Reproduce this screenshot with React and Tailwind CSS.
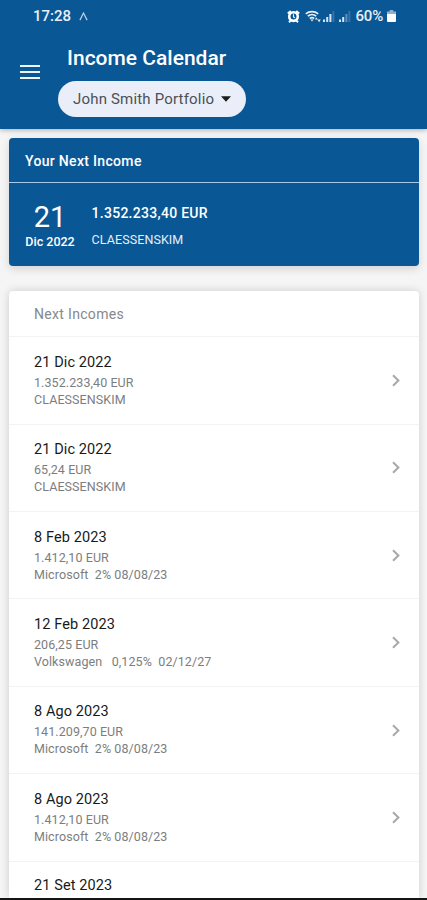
const incomes = [
  { date: '21 Dic 2022', amount: '1.352.233,40 EUR', name: 'CLAESSENSKIM' },
  { date: '21 Dic 2022', amount: '65,24 EUR', name: 'CLAESSENSKIM' },
  { date: '8 Feb 2023', amount: '1.412,10 EUR', name: 'Microsoft  2% 08/08/23' },
  { date: '12 Feb 2023', amount: '206,25 EUR', name: 'Volkswagen   0,125%  02/12/27' },
  { date: '8 Ago 2023', amount: '141.209,70 EUR', name: 'Microsoft  2% 08/08/23' },
  { date: '8 Ago 2023', amount: '1.412,10 EUR', name: 'Microsoft  2% 08/08/23' },
]

function AlarmIcon() {
  return (
    <svg className="w-[13px] h-[13px]" viewBox="0 0 13 13" fill="none">
      <circle cx="6.5" cy="6.6" r="4.3" stroke="#fff" strokeWidth="2.6" />
      <path d="M.8 3.4 3.8.9M12.2 3.4 9.2.9M2 12.2l1.8-1.8M11 12.2 9.2 10.4" stroke="#fff" strokeWidth="2" />
      <path d="M6.5 4.2v2.7l1.4.8" stroke="#fff" strokeWidth="1.1" />
    </svg>
  )
}

function WifiIcon() {
  return (
    <svg className="w-[17px] h-[13px]" viewBox="0 0 17 13" fill="none">
      <path d="M.8 3.8C4.2.8 9.8.8 13.2 3.8M2.8 6.2c2.4-2 6-2 8.4 0M4.8 8.5c1.3-1 3.1-1 4.4 0" stroke="#e3edf6" strokeWidth="1.7" />
      <path d="M5.4 9.4h3.2L7 11.6zM10 9.4l1.2-2.2 1.6 2.2zM12.4 9.6h3.4l-1.7 2.6z" fill="#e3edf6" />
    </svg>
  )
}

function SignalIcon({ strong }) {
  return (
    <svg className="w-3 h-3" viewBox="0 0 12 12">
      <rect x="0" y="9.5" width="2" height="2.5" fill="#d9e6f2" />
      <rect x="3.2" y="7" width="2" height="5" fill="#d9e6f2" />
      <rect x="6.4" y="4" width="2" height="8" fill={strong ? '#d9e6f2' : '#5f91bd'} />
      <rect x="9.4" y="1" width="2" height="11" fill="#3473aa" />
    </svg>
  )
}

function BatteryIcon() {
  return (
    <svg className="w-[9px] h-3" viewBox="0 0 9 12">
      <path d="M2.7 0h3.6v1.4H9V4H0V1.4h2.7z" fill="#8fb2d2" />
      <path d="M0 4h9v7a1 1 0 0 1-1 1H1a1 1 0 0 1-1-1z" fill="#fff" />
    </svg>
  )
}

function StatusBar() {
  return (
    <div className="flex items-center h-8 pl-[33px] pr-[31px] text-[#e6eff7]">
      <span className="text-[15px] font-medium">17:28</span>
      <svg className="ml-[8px] w-[9px] h-[9px]" viewBox="0 0 10 10" fill="none">
        <path d="M1 9 5 1.2 9 9" stroke="#b9cfe3" strokeWidth="1.4" />
      </svg>
      <div className="flex items-center ml-auto">
        <AlarmIcon />
        <div className="ml-[5px]"><WifiIcon /></div>
        <div className="ml-[1px]"><SignalIcon strong /></div>
        <div className="ml-[4px]"><SignalIcon /></div>
        <span className="ml-[5px] w-[31.5px] text-[15px] font-medium tracking-[-0.2px] whitespace-nowrap">60%</span>
        <BatteryIcon />
      </div>
    </div>
  )
}

function Header() {
  return (
    <header className="relative h-[129px] bg-[#0a5796] shadow-[0_1px_5px_rgba(0,0,0,0.3)]">
      <StatusBar />
      <div className="flex">
        <button className="flex flex-col gap-[4px] mt-[33px] ml-[19.5px] w-5">
          <span className="h-[2px] bg-[#eef3f8]" />
          <span className="h-[2px] bg-[#eef3f8]" />
          <span className="h-[2px] bg-[#eef3f8]" />
        </button>
        <div className="ml-[18.5px] pt-[12px]">
          <h1 className="ml-[9px] text-[21px] leading-7 font-medium text-white">Income Calendar</h1>
          <button className="flex items-center mt-[9px] w-[188px] h-[36px] pl-[15px] rounded-full bg-[#e9eef8] text-[15px] tracking-[0.18px] text-[#4c5057]">
            <span className="w-[142px] text-left whitespace-nowrap">John Smith Portfolio</span>
            <svg className="ml-[6px] w-[10px] h-[6px]" viewBox="0 0 11 6">
              <path d="M0 0h11L5.5 6z" fill="#1b1c20" />
            </svg>
          </button>
        </div>
      </div>
    </header>
  )
}

function NextIncome() {
  return (
    <section className="ml-[9px] mr-[8px] mt-[8.5px] h-[128px] rounded-[4px] bg-[#0a5796] text-white shadow-[0_3px_8px_rgba(0,0,0,0.14)]">
      <h2 className="h-[45.5px] pl-4 leading-[46px] text-[14px] font-medium tracking-[0.32px] border-b border-[#a9c8e6]">Your Next Income</h2>
      <div className="flex pt-[17px] pl-4">
        <div className="w-[50px] text-center">
          <p className="text-[29px] leading-[34px]">21</p>
          <p className="text-[12.5px] leading-[15px] font-medium whitespace-nowrap">Dic 2022</p>
        </div>
        <div className="ml-[16.5px] pt-[4px]">
          <p className="text-[14px] leading-[18px] font-medium tracking-[0.28px]">1.352.233,40 EUR</p>
          <p className="mt-[9px] text-[12.5px] leading-[18px] tracking-[0.1px] text-[#e6eff7]">CLAESSENSKIM</p>
        </div>
      </div>
    </section>
  )
}

function IncomeRow({ income }) {
  return (
    <li className="flex items-center h-[87.4px] shrink-0 pl-[25px] pr-[19px] border-t border-[#f3f3f3]">
      <div className="flex-1 pb-[1.4px] whitespace-pre text-[12.5px] leading-[17px] tracking-[0.08px] text-[#7b7e80]">
        <p className="text-[14.5px] leading-[22px] tracking-[0.1px] text-[#191919]">{income.date}</p>
        <p>{income.amount}</p>
        <p>{income.name}</p>
      </div>
      <svg className="w-2 h-[13px]" viewBox="0 0 8 13" fill="none">
        <path d="M1 1.2 6.4 6.5 1 11.8" stroke="#a8a8a8" strokeWidth="2" />
      </svg>
    </li>
  )
}

export default function App() {
  return (
    <div className="flex flex-col w-[427px] h-[900px] overflow-hidden bg-[#f5f5f5] font-['Roboto',sans-serif] border-b-2 border-[#151515]">
      <Header />
      <NextIncome />
      <section className="flex flex-col flex-1 min-h-0 ml-[9px] mr-[8px] mt-[25.5px] rounded-t-[4px] bg-white shadow-[0_0_9px_rgba(0,0,0,0.17)]">
        <h2 className="h-[45.3px] shrink-0 pl-[25px] leading-[46px] text-[14px] tracking-[0.32px] text-[#85898d]">Next Incomes</h2>
        <ul className="flex flex-col">
          {incomes.map((income, i) => (
            <IncomeRow key={i} income={income} />
          ))}
          <li className="pt-[13.5px] pl-[25px] border-t border-[#f3f3f3] text-[14.5px] leading-[22px] tracking-[0.1px] text-[#191919]">
            21 Set 2023
          </li>
        </ul>
      </section>
    </div>
  )
}
